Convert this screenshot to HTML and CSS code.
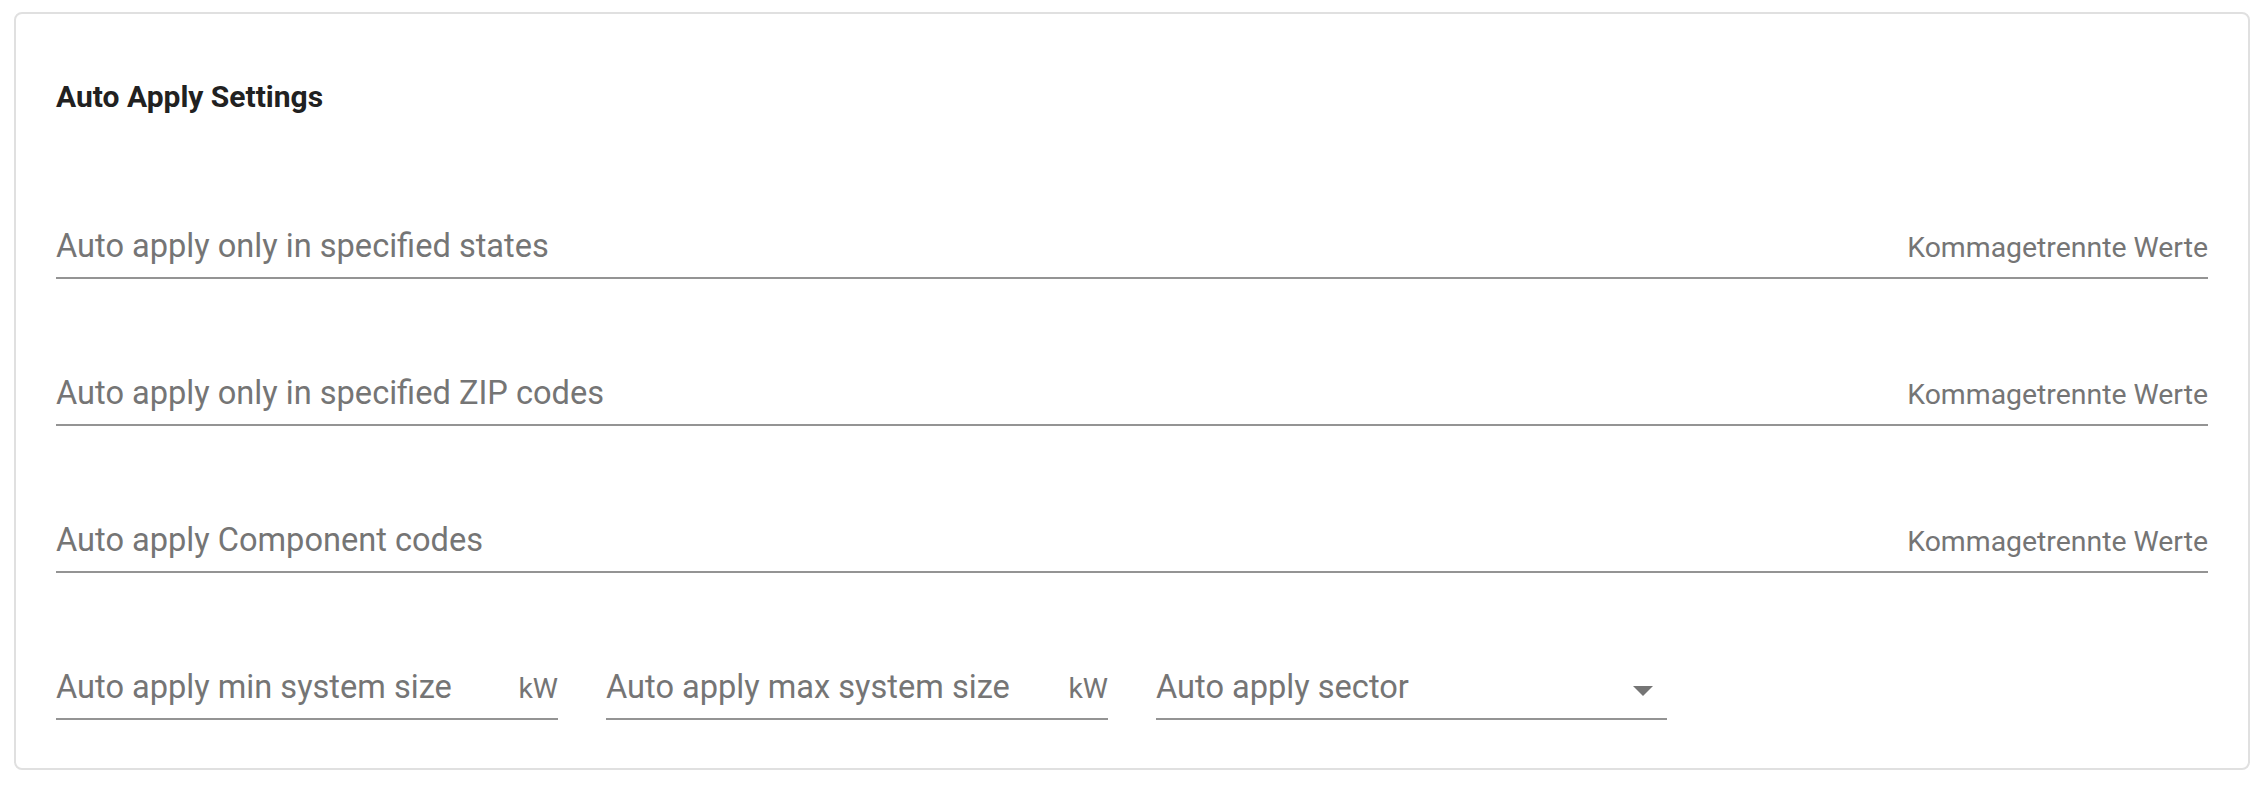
FILE: index.html
```html
<!DOCTYPE html>
<html lang="en">
<head>
  <meta charset="UTF-8" />
  <meta name="viewport" content="width=device-width, initial-scale=1.0"/>
  <title>Auto Apply Settings</title>
  <link rel="stylesheet" href="styles.css">
</head>
<body>
  <div class="card">
    <h2 class="card-title">Auto Apply Settings</h2>

    <div class="fields">
      <div class="field">
        <span class="field-label">Auto apply only in specified states</span>
        <span class="adornment">Kommagetrennte Werte</span>
      </div>

      <div class="field">
        <span class="field-label">Auto apply only in specified ZIP codes</span>
        <span class="adornment">Kommagetrennte Werte</span>
      </div>

      <div class="field">
        <span class="field-label">Auto apply Component codes</span>
        <span class="adornment">Kommagetrennte Werte</span>
      </div>

      <div class="field-row">
        <div class="field">
          <span class="field-label">Auto apply min system size</span>
          <span class="adornment">kW</span>
        </div>
        <div class="field">
          <span class="field-label">Auto apply max system size</span>
          <span class="adornment">kW</span>
        </div>
        <div class="field select">
          <span class="field-label">Auto apply sector</span>
          <svg class="arrow" viewBox="0 0 24 24"><path d="M7 10l5 5 5-5z"/></svg>
        </div>
      </div>
    </div>
  </div>
</body>
</html>
```

FILE: styles.css
```css
body {
  margin: 0;
  padding: 12px 16px 0 14px;
  background: #fff;
  font-family: Roboto, 'Liberation Sans', sans-serif;
}

.card {
  background: #fff;
  border: 2px solid #e0e0e0;
  border-radius: 8px;
  padding: 65px 40px 48px;
  height: 758px;
  box-sizing: border-box;
}

.card-title {
  margin: 0;
  font-size: 30px;
  line-height: 36px;
  font-weight: 700;
  color: #212121;
}

.fields {
  display: flex;
  flex-direction: column;
  gap: 81px;
  margin-top: 98px;
}

.field {
  display: flex;
  align-items: flex-end;
  justify-content: space-between;
  border-bottom: 2px solid #949494;
  color: #757575;
}

.field-label {
  font-size: 32.6px;
  line-height: 38px;
  padding: 14px 0 12px;
  white-space: nowrap;
}

.adornment {
  font-size: 28.4px;
  line-height: 28px;
  padding-bottom: 15px;
  white-space: nowrap;
}

.field-row {
  display: grid;
  grid-template-columns: 502px 502px 511px;
  gap: 48px;
}

.arrow {
  width: 48px;
  height: 48px;
  align-self: flex-end;
  margin-bottom: 4px;
  fill: #757575;
}
```
